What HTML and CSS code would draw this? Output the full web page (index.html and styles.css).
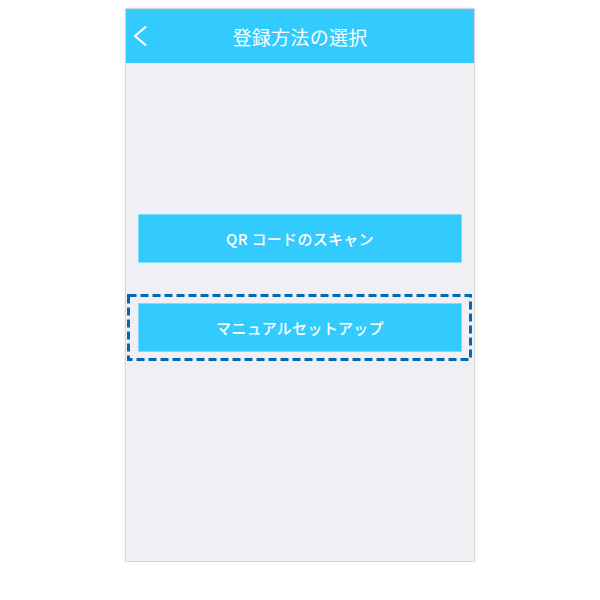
FILE: index.html
```html
<!DOCTYPE html>
<html lang="ja">
<head>
<meta charset="utf-8">
<link rel="stylesheet" href="styles.css">
</head>
<body>
<div class="phone">
  <header class="bar">
    <svg class="back" width="14" height="20" viewBox="0 0 14 20"><polyline points="12.5,1 2,10 12.5,19" fill="none" stroke="#fff" stroke-width="2" stroke-linecap="round" stroke-linejoin="round"/></svg>
    <h1 class="title">登録方法の選択</h1>
  </header>
  <main class="content">
    <button class="btn">QR コードのスキャン</button>
    <div class="mark">
      <button class="btn">マニュアルセットアップ</button>
      <svg class="dash" width="345" height="67" viewBox="0 0 345 67"><rect x="1.5" y="1.5" width="342" height="64" fill="none" stroke="#0567b4" stroke-width="3" stroke-dasharray="8 4"/></svg>
    </div>
  </main>
</div>
</body>
</html>
```
FILE: styles.css
```css
html, body {
  margin: 0;
  padding: 0;
  background: #fff;
}
body {
  font-family: "Noto Sans CJK JP", "Noto Sans", sans-serif;
}
.phone {
  width: 348px;
  height: 552px;
  margin: 8px 0 0 125px;
  border: 1px solid #d6d6d6;
  box-shadow: 0 0 2px rgba(0,0,0,0.12);
  background: #efeff4;
  display: flex;
  flex-direction: column;
}
.bar {
  height: 54px;
  background: #33cbfe;
  display: flex;
  align-items: center;
  justify-content: center;
  position: relative;
}
.back {
  position: absolute;
  left: 7px;
  top: 17px;
}
.title {
  margin: 0;
  color: #fff;
  font-size: 19px;
  font-weight: 400;
  letter-spacing: 0.3px;
}
.content {
  display: flex;
  flex-direction: column;
  padding: 151px 12px 0 12px;
  gap: 40px;
}
.btn {
  display: block;
  width: 100%;
  height: 49px;
  border: 1px solid #7fdcfd;
  background: #33cbfe;
  color: #fff;
  font-family: "Noto Sans CJK JP", "Noto Sans", sans-serif;
  font-size: 15px;
  font-weight: 500;
  letter-spacing: 0.3px;
  padding: 0;
}
.mark {
  position: relative;
}
.dash {
  position: absolute;
  left: -11px;
  top: -9px;
}
```
